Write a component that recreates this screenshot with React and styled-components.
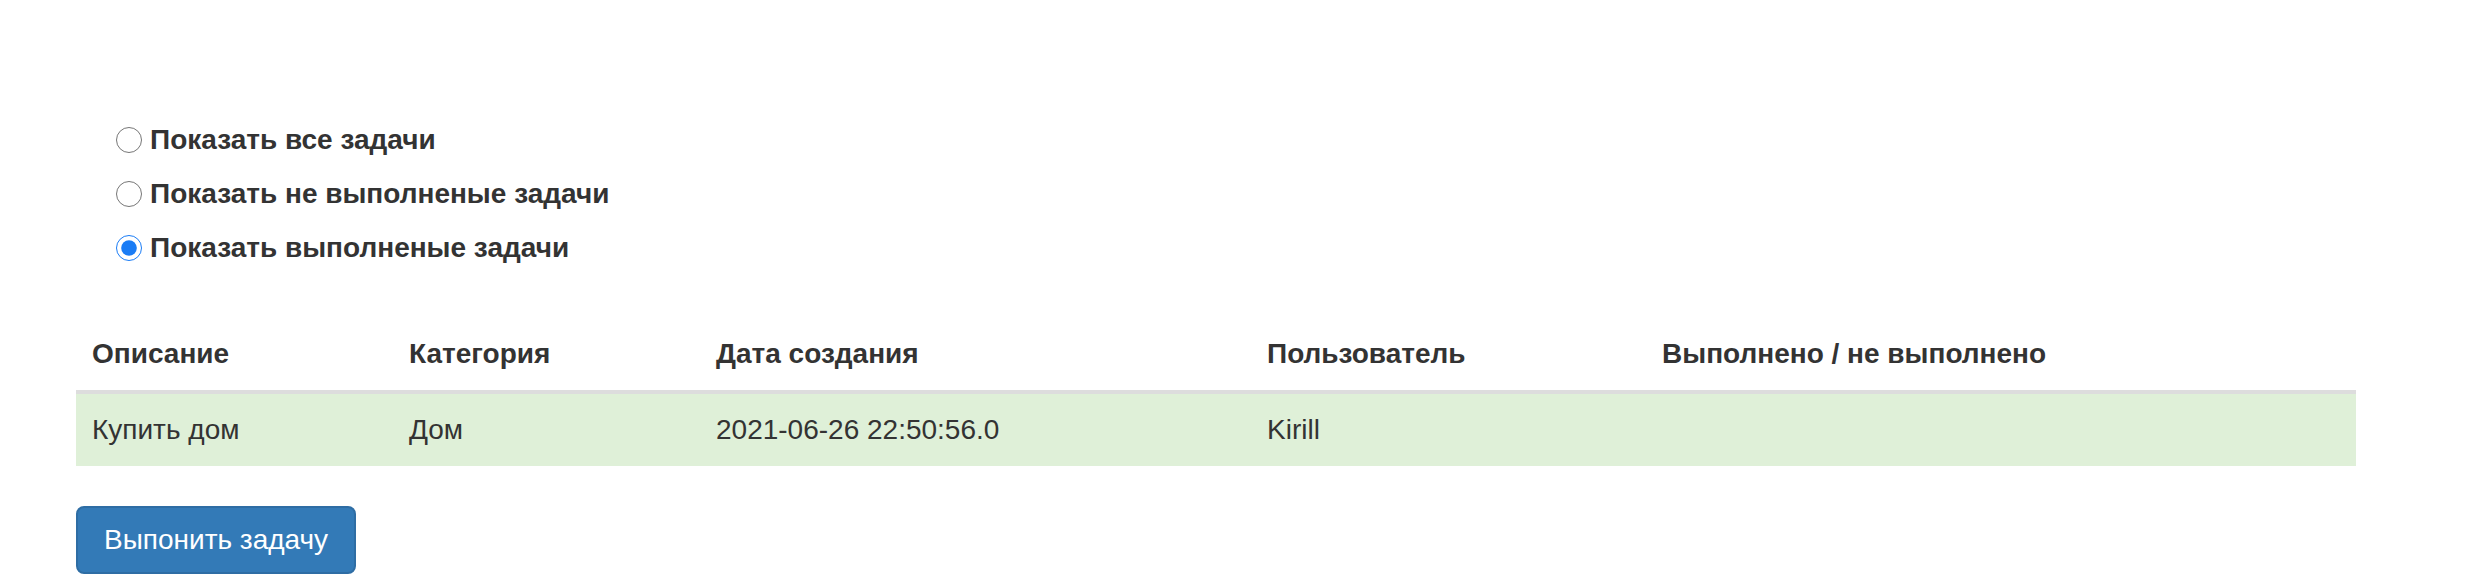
import React, { useState } from 'react';
import styled, { createGlobalStyle } from 'styled-components';

const GlobalStyle = createGlobalStyle`
  body {
    margin: 0;
    background: #fff;
    color: #333;
    font-family: "Liberation Sans", Arial, Helvetica, sans-serif;
    font-size: 28px;
    line-height: 40px;
  }
`;

const Page = styled.div`
  padding: 113px 0 0 76px;
`;

const Filters = styled.div`
  display: flex;
  flex-direction: column;
  margin-left: 40px;
  margin-bottom: 43px;
`;

const RadioRow = styled.label`
  display: flex;
  align-items: center;
  height: 54px;
  font-weight: bold;
  cursor: pointer;
`;

const Radio = styled.input`
  width: 26px;
  height: 26px;
  margin: 0 8px 0 0;
  accent-color: #1a7cf5;
`;

const Table = styled.table`
  width: 2280px;
  border-collapse: collapse;
  border-spacing: 0;
  margin-bottom: 40px;
`;

const Th = styled.th`
  box-sizing: border-box;
  width: ${p => p.$w}px;
  padding: 16px;
  text-align: left;
  font-weight: bold;
  vertical-align: bottom;
  border-bottom: 4px solid #ddd;
`;

const Row = styled.tr`
  background: ${p => (p.$done ? '#dff0d8' : 'transparent')};
`;

const Td = styled.td`
  padding: 16px;
  vertical-align: top;
`;

const Button = styled.button`
  display: inline-block;
  padding: 12px 26px;
  font-family: inherit;
  font-size: 28px;
  line-height: 40px;
  color: #fff;
  background: #337ab7;
  border: 2px solid #2e6da4;
  border-radius: 8px;
  cursor: pointer;
`;

const columns = [
  { title: 'Описание', w: 317 },
  { title: 'Категория', w: 307 },
  { title: 'Дата создания', w: 551 },
  { title: 'Пользователь', w: 395 },
  { title: 'Выполнено / не выполнено', w: 710 },
];

const tasks = [
  { id: 1, description: 'Купить дом', category: 'Дом', created: '2021-06-26 22:50:56.0', user: 'Kirill', done: true },
];

const filters = [
  { value: 'all', label: 'Показать все задачи' },
  { value: 'open', label: 'Показать не выполненые задачи' },
  { value: 'done', label: 'Показать выполненые задачи' },
];

export default function App() {
  const [filter, setFilter] = useState('done');

  return (
    <Page>
      <GlobalStyle />
      <Filters>
        {filters.map(f => (
          <RadioRow key={f.value}>
            <Radio
              type="radio"
              name="filter"
              value={f.value}
              checked={filter === f.value}
              onChange={() => setFilter(f.value)}
            />
            {f.label}
          </RadioRow>
        ))}
      </Filters>
      <Table>
        <thead>
          <tr>
            {columns.map(c => (
              <Th key={c.title} $w={c.w}>{c.title}</Th>
            ))}
          </tr>
        </thead>
        <tbody>
          {tasks.map(t => (
            <Row key={t.id} $done={t.done}>
              <Td>{t.description}</Td>
              <Td>{t.category}</Td>
              <Td>{t.created}</Td>
              <Td>{t.user}</Td>
              <Td></Td>
            </Row>
          ))}
        </tbody>
      </Table>
      <Button type="button">Выпонить задачу</Button>
    </Page>
  );
}
